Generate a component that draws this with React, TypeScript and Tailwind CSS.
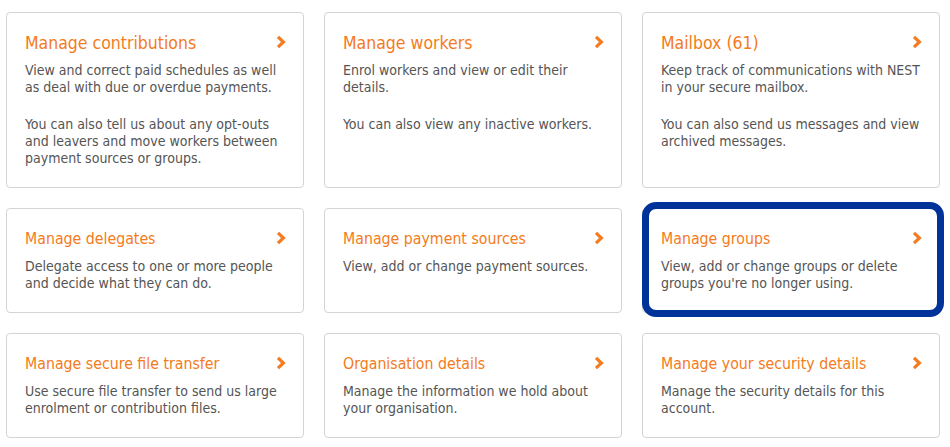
import React from 'react';

type Tile = {
  title: string;
  body: string[];
  big?: boolean;
  focused?: boolean;
};

const tiles: Tile[] = [
  {
    title: 'Manage contributions',
    big: true,
    body: [
      'View and correct paid schedules as well as deal with due or overdue payments.',
      'You can also tell us about any opt-outs and leavers and move workers between payment sources or groups.',
    ],
  },
  {
    title: 'Manage workers',
    big: true,
    body: ['Enrol workers and view or edit their details.', 'You can also view any inactive workers.'],
  },
  {
    title: 'Mailbox (61)',
    big: true,
    body: [
      'Keep track of communications with NEST in your secure mailbox.',
      'You can also send us messages and view archived messages.',
    ],
  },
  {
    title: 'Manage delegates',
    body: ['Delegate access to one or more people and decide what they can do.'],
  },
  {
    title: 'Manage payment sources',
    body: ['View, add or change payment sources.'],
  },
  {
    title: 'Manage groups',
    focused: true,
    body: ["View, add or change groups or delete groups you're no longer using."],
  },
  {
    title: 'Manage secure file transfer',
    body: ['Use secure file transfer to send us large enrolment or contribution files.'],
  },
  {
    title: 'Organisation details',
    body: ['Manage the information we hold about your organisation.'],
  },
  {
    title: 'Manage your security details',
    body: ['Manage the security details for this account.'],
  },
];

function Chevron() {
  return (
    <svg width="10" height="14" viewBox="0 0 10 14" className="shrink-0 mt-[3px]">
      <path d="M2 1.8 L7.4 7 L2 12.2" fill="none" stroke="#f47b20" strokeWidth="3.2" strokeLinejoin="miter" />
    </svg>
  );
}

export default function App() {
  return (
    <div
      className="w-[950px] h-[447px] bg-white overflow-hidden pl-[6px] pt-[12px]"
      style={{ fontFamily: '"DejaVu Sans Condensed", Tahoma, "DejaVu Sans", sans-serif' }}
    >
      <div className="grid grid-cols-[298px_298px_298px] gap-x-[20px] gap-y-[20px]">
        {tiles.map((t) => (
          <a
            key={t.title}
            href="#"
            className="relative block border border-[#d4d4d4] rounded-[4px] bg-white pl-[18px] pr-[17px] pt-[19px] pb-[20px]"
          >
            {t.focused && (
              <span className="absolute -top-[7px] -left-px -right-[5px] -bottom-[5px] border-[7px] border-[#003399] rounded-[14px] pointer-events-none" />
            )}
            <div className="flex items-start justify-between">
              <h2
                className={`${t.big ? 'text-[17.5px]' : 'text-[15.75px]'} leading-[22px] text-[#f47b20] font-normal`}
              >
                {t.title}
              </h2>
              <Chevron />
            </div>
            <div className="mt-[8px] text-[14px] leading-[17px] text-[#555555]">
              {t.body.map((p, i) => (
                <p key={i} className={i > 0 ? 'mt-[20px]' : ''}>
                  {p}
                </p>
              ))}
            </div>
          </a>
        ))}
      </div>
    </div>
  );
}
